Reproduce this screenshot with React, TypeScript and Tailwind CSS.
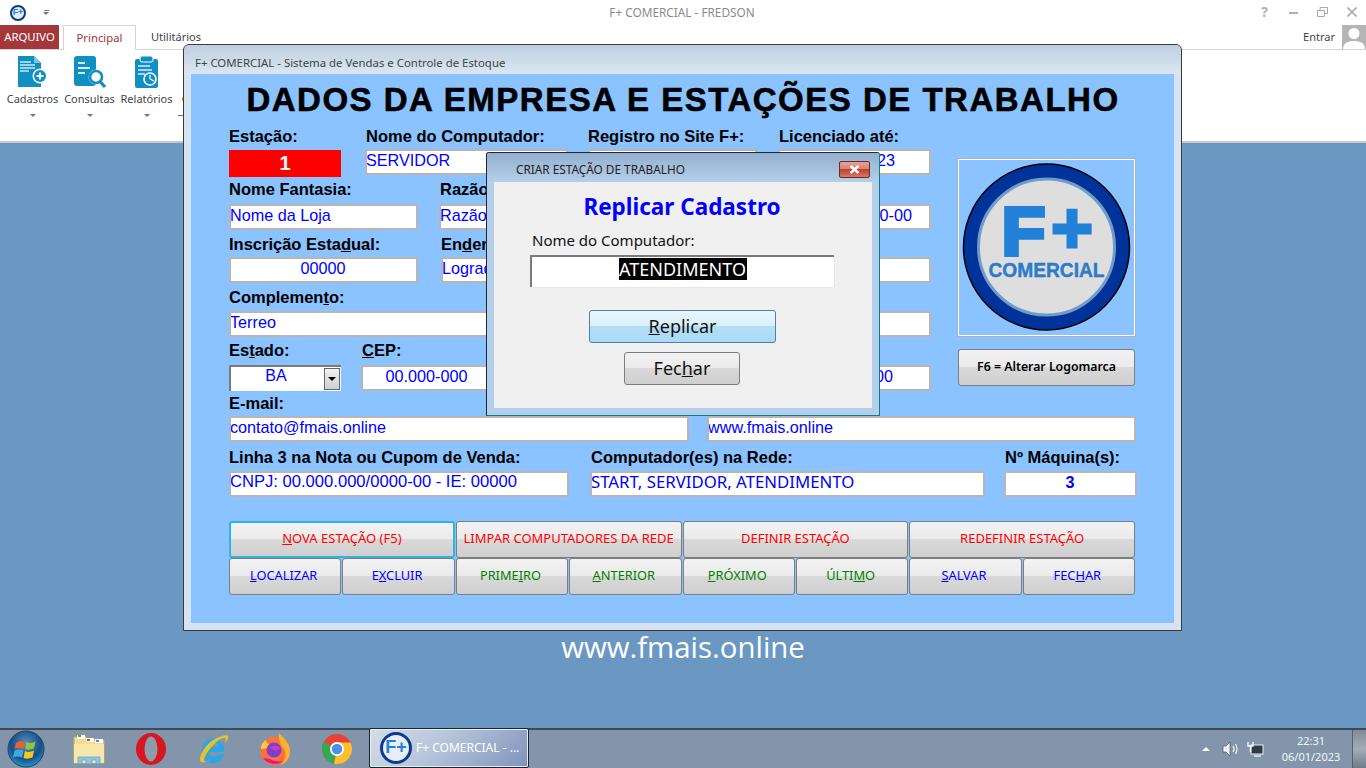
import React from "react";

const ARIAL = "font-['Liberation_Sans',Arial,sans-serif]";
const UI = "font-['Noto_Sans',Tahoma,sans-serif]";

const Field = ({
  w,
  children,
  center,
  className = "",
}: {
  w: string;
  children?: React.ReactNode;
  center?: boolean;
  className?: string;
}) => (
  <div
    className={`${w} h-[26px] shrink-0 bg-white border-2 border-[#b6b6b6] text-[16.2px] leading-[18px] text-[#0000ff] whitespace-nowrap overflow-hidden -indent-px ${
      center ? "text-center" : ""
    } ${className}`}
  >
    {children}
  </div>
);

const Label = ({ children, className = "" }: { children: React.ReactNode; className?: string }) => (
  <div className={`font-bold text-[16.5px] text-black whitespace-nowrap flex items-center ${className}`}>{children}</div>
);

const Btn = ({
  children,
  color,
  focus,
  blue,
  className = "",
}: {
  children: React.ReactNode;
  color?: string;
  focus?: boolean;
  blue?: boolean;
  className?: string;
}) => (
  <div
    className={`flex items-center justify-center rounded-[3px] border whitespace-nowrap ${UI} ${
      blue
        ? "border-[#4f81a8] bg-[linear-gradient(#e9f6fd_0%,#daf0fb_48%,#b3dff6_50%,#a9daf5_100%)]"
        : focus
        ? "border-[#2bb5e0] border-2 bg-[linear-gradient(#f2f2f2_0%,#ebebeb_48%,#d9d9d9_50%,#cfcfcf_100%)]"
        : "border-[#7d7d7d] bg-[linear-gradient(#f2f2f2_0%,#ebebeb_48%,#d9d9d9_50%,#cfcfcf_100%)]"
    } ${color || ""} ${className}`}
  >
    <span>{children}</span>
  </div>
);

const Logo = () => (
  <svg width="170" height="170" viewBox="0 0 170 170">
    <circle cx="84.500" cy="84" r="83" fill="#003399" stroke="#000" strokeWidth="1.500" />
    <circle cx="84.500" cy="84" r="68" fill="#dedede" stroke="#6f9cc8" strokeWidth="3" />
    <text x="39.500" y="91.500" textLength="44" lengthAdjust="spacingAndGlyphs" fontFamily="Liberation Sans" fontWeight="bold" fontSize="68" fill="#2380d8" stroke="#2380d8" strokeWidth="4">
      F
    </text>
    <text x="89" y="90.300" fontFamily="Liberation Sans" fontWeight="bold" fontSize="72" fill="#2380d8" stroke="#2380d8" strokeWidth="3">
      +
    </text>
    <text x="26.500" y="113.500" textLength="116" lengthAdjust="spacingAndGlyphs" fontFamily="Liberation Sans" fontWeight="bold" fontSize="20" fill="#2380d8" stroke="#3a6ea5" strokeWidth="0.4">
      COMERCIAL
    </text>
  </svg>
);

const FPlus = ({ size, ring = 4 }: { size: number; ring?: number }) => (
  <div
    className={`flex items-center justify-center rounded-full bg-[#e8eef5] border-[#0b3a8f] font-bold text-[#2380d8] ${ARIAL}`}
    style={{ width: size, height: size, borderWidth: ring, fontSize: size * 0.56, lineHeight: 1 }}
  >
    F+
  </div>
);

const CadastrosIcon = () => (
  <svg width="32" height="34" viewBox="0 0 32 34">
    <path d="M1 1h16l7 7v24H1z" fill="#0f8fc2" />
    <path d="M17 1v7h7z" fill="#7cc4e2" />
    <path d="M3 7h11M3 10h15M3 13h15M3 16h9" stroke="#cfe9f5" strokeWidth="1.400" />
    <circle cx="23" cy="21" r="7.500" fill="#fff" />
    <circle cx="23" cy="21" r="6" fill="#0f8fc2" />
    <path d="M23 17.500v7M19.500 21h7" stroke="#fff" strokeWidth="1.800" />
  </svg>
);

const ConsultasIcon = () => (
  <svg width="34" height="34" viewBox="0 0 34 34">
    <rect x="1" y="1" width="22" height="30" rx="3" fill="#0f8fc2" />
    <path d="M5 8h7M5 13h12M5 18h7" stroke="#d6edf7" strokeWidth="2" />
    <circle cx="23" cy="22" r="7.500" fill="#fff" />
    <circle cx="23" cy="22" r="6" fill="none" stroke="#0f8fc2" strokeWidth="2.600" />
    <path d="M27.500 27l4.500 5" stroke="#0f8fc2" strokeWidth="3.200" />
  </svg>
);

const RelatoriosIcon = () => (
  <svg width="26" height="34" viewBox="0 0 26 34">
    <rect x="1" y="4" width="23" height="29" rx="2" fill="#0f8fc2" />
    <rect x="6" y="1" width="13" height="6" rx="2" fill="#0f8fc2" stroke="#fff" strokeWidth="1" />
    <path d="M4 11h12M4 15h14M4 19h7" stroke="#d6edf7" strokeWidth="1.500" />
    <circle cx="16" cy="24" r="6" fill="#0f8fc2" stroke="#fff" strokeWidth="1.600" />
    <path d="M16 24v-4M16 24l4 2" stroke="#fff" strokeWidth="1.200" />
  </svg>
);

const RibbonItem = ({ icon, label, w, className = "" }: { icon: React.ReactNode; label: string; w: string; className?: string }) => (
  <div className={`${w} flex flex-col items-center shrink-0 text-[11px] text-[#444] ${UI} ${className}`}>
    <div className="h-[36px] flex items-end">{icon}</div>
    <div className="mt-[1px] leading-[17px]">{label}</div>
    <div className="mt-[7px] w-0 h-0 border-x-[3.5px] border-x-transparent border-t-[3.5px] border-t-[#777]" />
  </div>
);

const StartOrb = () => (
  <svg width="38" height="38" viewBox="0 0 38 38">
    <defs>
      <radialGradient id="orb" cx="50%" cy="35%" r="70%">
        <stop offset="0%" stopColor="#5a8fc0" />
        <stop offset="60%" stopColor="#174f86" />
        <stop offset="100%" stopColor="#2aa3d8" />
      </radialGradient>
    </defs>
    <circle cx="19" cy="19" r="18" fill="url(#orb)" stroke="#23425f" />
    <path d="M9 13q4-3 9-1l-1.500 7q-5-2-9 0z" fill="#e8622c" />
    <path d="M19.500 12q4 2 9-.5l-1.500 7q-5 2-9 .5z" fill="#8cc63f" />
    <path d="M7.500 20.500q4-2 9 0l-1.500 7q-5-2-9 0z" fill="#3fa9e0" />
    <path d="M18 21q4 2 9-.5l-1.500 7q-5 2-9 .5z" fill="#f8c81c" />
  </svg>
);

const FolderIcon = () => (
  <svg width="34" height="32" viewBox="0 0 34 32">
    <path d="M2 4h12l2 3h16v23H2z" fill="#f3dc8f" stroke="#c8ad62" />
    <rect x="5" y="2" width="8" height="4" fill="#fff" />
    <rect x="6" y="2" width="3" height="2" fill="#3bb54a" />
    <rect x="14" y="5" width="8" height="4" fill="#fff" />
    <rect x="15" y="6" width="3" height="2" fill="#d8413a" />
    <rect x="23" y="6" width="8" height="4" fill="#fff" />
    <rect x="24" y="7" width="3" height="2" fill="#2e9ad6" />
    <path d="M2 11h30v19H2z" fill="#f7e7a9" />
    <path d="M6 31V24h22v7h-4v-4h-4v4h-6v-4h-4v4z" fill="#8fc6e6" stroke="#5c9ac0" strokeWidth=".7" />
  </svg>
);

const OperaIcon = () => (
  <svg width="32" height="34" viewBox="0 0 32 34">
    <ellipse cx="16" cy="17" rx="15" ry="16" fill="#d8161f" />
    <ellipse cx="16" cy="17" rx="6.500" ry="12.500" fill="#8d9cab" />
  </svg>
);

const IeIcon = () => (
  <svg width="32" height="34" viewBox="0 0 32 34">
    <path d="M5 18a11 11 0 0 1 22-1v3H11a6 6 0 0 0 11 2h5a11 11 0 0 1-22-4zm6-3h10a5 5 0 0 0-10 0z" fill="#2ba6e6" />
    <path d="M4 30c-4-3 4-18 14-23 6-3 12-5 13-3 1 2-1 5-3 7 1-3 1-5-1-5C20 6 6 24 7 29c1 1 4 0 7-2-4 3-8 4-10 3z" fill="#e8c22c" />
  </svg>
);

const FirefoxIcon = () => (
  <svg width="32" height="34" viewBox="0 0 32 34">
    <circle cx="16" cy="19" r="14.500" fill="#ff7139" />
    <path d="M20 1c3 4 11 9 11 18 0 8-5 13-10 14 6-4 7-12 3-17-2-3-5-8-4-15z" fill="#ffb02e" />
    <path d="M2 17c0-5 3-8 5-9 0 3 2 4 4 5-2 1-2 3-2 3l-7 1z" fill="#ffcb3d" />
    <circle cx="15" cy="18" r="7.500" fill="#7b3fc9" />
    <path d="M10 16c3-3 8-3 12 0-2 1-5 3-5 3l-7-3z" fill="#c43cc0" />
    <path d="M4 26c4 6 14 8 20 3-6 1-10 0-13-2z" fill="#e31587" />
  </svg>
);

const ChromeIcon = () => (
  <svg width="32" height="32" viewBox="0 0 32 32">
    <circle cx="16" cy="16" r="15" fill="#ea4335" />
    <path d="M16 16L3 8.500A15 15 0 0 0 13 30.700z" fill="#34a853" />
    <path d="M16 16l-3 14.700A15 15 0 0 0 29.500 9.500H16z" fill="#fbc02d" />
    <circle cx="16" cy="16" r="7" fill="#fff" />
    <circle cx="16" cy="16" r="5.200" fill="#4a8fe8" />
  </svg>
);

const TaskIcon = ({ children, w, className = "" }: { children: React.ReactNode; w: string; className?: string }) => (
  <div className={`${w} shrink-0 h-full flex items-center justify-center ${className}`}>{children}</div>
);

export default function App() {
  return (
    <div className={`relative w-[1366px] h-[768px] overflow-hidden flex flex-col bg-[#6a98c3] ${UI}`}>
      {/* barra de titulo */}
      <div className="h-[25px] shrink-0 bg-white flex items-center relative">
        <div className="ml-[10px]">
          <FPlus size={16} ring={2} />
        </div>
        <div className="ml-[17px] flex flex-col items-center gap-[1px]">
          <div className="w-[5px] h-px bg-[#777]" />
          <div className="w-0 h-0 border-x-[3px] border-x-transparent border-t-[3px] border-t-[#777]" />
        </div>
        <div className="absolute left-0 right-0 text-center text-[11.800px] text-[#8a8a8a] pr-[2px]">F+ COMERCIAL - FREDSON</div>
        <div className="ml-auto flex items-center text-[#b0b0b0] -mt-[2px]">
          <span className="w-[29px] text-center font-bold text-[14px]">?</span>
          <span className="w-[29px] flex justify-center">
            <span className="w-[9px] h-[2px] bg-[#b0b0b0] mt-[3px]" />
          </span>
          <span className="w-[29px] flex justify-center">
            <svg width="11" height="10" viewBox="0 0 11 10" fill="none" stroke="#a8a8a8">
              <path d="M.5 3.500h7v6h-7zM3 3V.5h7.500v6H8" />
            </svg>
          </span>
          <span className="w-[29px] flex justify-center">
            <svg width="10" height="10" viewBox="0 0 10 10" stroke="#a8a8a8" strokeWidth="1.600">
              <path d="M.5.5l9 9M9.500.5l-9 9" />
            </svg>
          </span>
        </div>
      </div>

      {/* abas */}
      <div className="h-[25px] shrink-0 bg-white flex items-stretch border-b border-[#d4d4d4] relative text-[11.300px]">
        <div className="w-[59px] bg-[#a4373a] text-white flex items-center justify-center">ARQUIVO</div>
        <div className="ml-[4px] w-[73px] h-[25px] bg-white border border-b-0 border-[#d4d4d4] text-[#a4373a] flex items-center justify-center">
          Principal
        </div>
        <div className="ml-[15px] text-[11px] text-[#444] flex items-center">Utilitários</div>
        <div className="ml-auto flex items-center text-[#444]">
          <span className="mr-[7px] text-[11px]">Entrar</span>
          <div className="w-[24px] h-[24px] bg-[#b5b5b5] overflow-hidden flex justify-center">
            <svg width="24" height="24" viewBox="0 0 24 24" fill="#fff">
              <circle cx="12" cy="8.500" r="5.500" />
              <path d="M1 24c0-6 5-8 11-8s11 2 11 8z" />
            </svg>
          </div>
        </div>
      </div>

      {/* ribbon */}
      <div className="h-[93px] shrink-0 bg-white border-b-2 border-[#c9c9c9] flex items-start pt-[3px] pl-[4px]">
        <RibbonItem w="w-[57px]" icon={<CadastrosIcon />} label="Cadastros" />
        <RibbonItem w="w-[57px]" icon={<ConsultasIcon />} label="Consultas" />
        <RibbonItem w="w-[57px]" icon={<RelatoriosIcon />} label="Relatórios" />
        <div className="ml-[3px] mt-[62px] w-[5px] h-px shrink-0 bg-[#777]" />
        <RibbonItem w="w-[57px]" className="-ml-[5px]" icon={<span />} label="Controles" />
      </div>

      {/* area de trabalho */}
      <div className="flex-1" />

      {/* barra de tarefas */}
      <div className="h-[40px] shrink-0 bg-[#8295aa] border-t-2 border-[#3f4a55] flex items-center text-white">
        <TaskIcon w="w-[52px]">
          <StartOrb />
        </TaskIcon>
        <TaskIcon w="w-[62px]" className="ml-[6px]">
          <FolderIcon />
        </TaskIcon>
        <TaskIcon w="w-[62px]">
          <OperaIcon />
        </TaskIcon>
        <TaskIcon w="w-[62px]">
          <IeIcon />
        </TaskIcon>
        <TaskIcon w="w-[62px]">
          <FirefoxIcon />
        </TaskIcon>
        <TaskIcon w="w-[62px]">
          <ChromeIcon />
        </TaskIcon>
        <div className="ml-[1px] w-[160px] h-[40px] -mt-[2px] shrink-0 rounded-[2px] border border-[#1a2430] bg-[linear-gradient(135deg,#d5dde8_0%,#b5c3d9_45%,#7f93bb_100%)] shadow-[inset_0_0_0_1px_#e8eef5] flex items-center pl-[10px] gap-[4px] text-[12px]">
          <FPlus size={32} ring={3} />
          <span>F+ COMERCIAL - ...</span>
        </div>
        <div className="ml-auto flex items-center h-full">
          <div className="w-0 h-0 border-x-[4px] border-x-transparent border-b-[4px] border-b-white mr-[12px]" />
          <svg width="18" height="16" viewBox="0 0 18 16" className="mr-[7px]">
            <path d="M1 5h3l4-4v14l-4-4H1z" fill="#eef2f6" stroke="#39444f" strokeWidth=".6" />
            <path d="M11 5q2 3 0 6M13.500 3q3 5 0 10" fill="none" stroke="#eef2f6" strokeWidth="1.200" />
          </svg>
          <svg width="17" height="16" viewBox="0 0 17 16" className="mr-[12px]">
            <rect x="4" y="4" width="12" height="9" fill="#2f3a45" stroke="#eef2f6" />
            <path d="M7 15h7" stroke="#eef2f6" strokeWidth="1.400" />
            <path d="M1 1v4h5V1M3.500 5v6" fill="none" stroke="#fff" strokeWidth="1.300" />
          </svg>
          <div className="w-[70px] text-center text-[11px] leading-[16px] text-[#f2f5f8]">
            <div>22:31</div>
            <div>06/01/2023</div>
          </div>
          <div className="ml-[6px] w-[14px] h-full bg-[linear-gradient(#7f8c99,#a4adb6_50%,#6f7c89)] border-l border-[#50606f]" />
        </div>
      </div>

      <div className="absolute left-0 right-0 top-[628px] text-center text-[29.400px] leading-[38px] text-white font-['Open_Sans',sans-serif]">
        www.fmais.online
      </div>

      {/* janela principal */}
      <div className="absolute left-[183px] top-[44px] w-[999px] h-[587px] rounded-t-[6px] border border-[#3a3a3a] bg-[#d7e3f1] flex flex-col px-[7px] pb-[7px]">
        <div className="h-[29px] shrink-0 -mx-[7px] px-[11px] rounded-t-[6px] bg-[linear-gradient(#bfcfe0,#dbe6f2)] flex items-center text-[11.400px] text-[#444] pt-[6px]">
          F+ COMERCIAL - Sistema de Vendas e Controle de Estoque
        </div>
        <div className={`flex-1 bg-[#8ac3ff] pl-[38px] ${ARIAL}`}>
          <div className="h-[50px] text-center pr-[37px] text-[33px] leading-[52px] font-bold text-black tracking-[1.5px] whitespace-nowrap [-webkit-text-stroke:0.6px_black]">
            DADOS DA EMPRESA E ESTAÇÕES DE TRABALHO
          </div>

          <div className="flex">
            {/* coluna esquerda */}
            <div className="w-[702px] shrink-0">
              <div className="flex h-[51px]">
                <div className="w-[136px] shrink-0">
                  <Label className="h-[25px]">Estação:</Label>
                  <div className="w-[112px] h-[27px] mt-[1px] bg-[#ff0000] text-white font-bold text-[20px] text-center leading-[26px] relative">1</div>
                </div>
                <div className="w-[223px] shrink-0">
                  <Label className="h-[25px] ml-[1px]">Nome do Computador:</Label>
                  <Field w="w-[203px]">SERVIDOR</Field>
                </div>
                <div className="w-[190px] shrink-0">
                  <Label className="h-[25px]">Registro no Site F+:</Label>
                  <Field w="w-[169px]" />
                </div>
                <div>
                  <Label className="h-[25px] ml-[1px]">Licenciado até:</Label>
                  <Field w="w-[153px]" className="text-right pr-[34px]">
                    31/12/2023
                  </Field>
                </div>
              </div>

              <Label className="h-[29px]">
                <span className="w-[211px] shrink-0">Nome Fantasia:</span>
                <span>Razão Social:</span>
              </Label>
              <div className="flex">
                <Field w="w-[189px]">Nome da Loja</Field>
                <Field w="w-[270px]" className="ml-[21px]">
                  Razão Social
                </Field>
                <Field w="w-[211px]" className="ml-[11px] text-right pr-[17px]">
                  (00) 00000-00
                </Field>
              </div>

              <Label className="h-[27px] pt-[1px]">
                <span className="w-[212px] shrink-0">
                  Inscrição Esta<u>d</u>ual:
                </span>
                <span>
                  En<u>d</u>ereço:
                </span>
              </Label>
              <div className="flex">
                <Field w="w-[189px]" center>
                  00000
                </Field>
                <Field w="w-[490px]" className="ml-[23px]">
                  Logradouro
                </Field>
              </div>

              <Label className="h-[28px] pt-[1px]">
                <span>
                  Complemen<u>t</u>o:
                </span>
              </Label>
              <Field w="w-[702px]">Terreo</Field>

              <Label className="h-[28px] pb-[1px]">
                <span className="w-[133px] shrink-0">
                  Es<u>t</u>ado:
                </span>
                <span>
                  <u>C</u>EP:
                </span>
              </Label>
              <div className="flex">
                <div className="w-[112px] h-[26px] shrink-0 bg-white border-t-2 border-l-2 border-[#7a7a7a] flex items-center text-[16px] text-[#0000ff]">
                  <span className="flex-1 text-center pr-[3px] self-start leading-[18px]">BA</span>
                  <div className="w-[16px] h-[22px] mr-[1px] bg-[linear-gradient(#f2f2f2,#cfcfcf)] border border-[#666] flex items-center justify-center">
                    <span className="w-0 h-0 border-x-[4px] border-x-transparent border-t-[4px] border-t-black" />
                  </div>
                </div>
                <Field w="w-[132px]" center className="ml-[20px]">
                  00.000-000
                </Field>
                <Field w="w-[438px]" className="text-right pr-[36px]">
                  00
                </Field>
              </div>
            </div>

            {/* logomarca */}
            <div className="ml-[26px] pt-[34px] w-[179px] shrink-0">
              <div className="w-[179px] h-[179px] border border-[#b0b0b0] shadow-[inset_0_0_0_1px_#fff] flex items-center justify-center">
                <Logo />
              </div>
              <Btn className="w-[177px] h-[37px] mt-[12px] ml-[1px] text-[12.300px] font-semibold text-black">F6 = Alterar Logomarca</Btn>
            </div>
          </div>

          <Label className="h-[25px]">
            <span className="w-[479px] shrink-0">E-mail:</span>
            <span>Site:</span>
          </Label>
          <div className="flex">
            <Field w="w-[460px]">contato@fmais.online</Field>
            <Field w="w-[429px]" className="ml-[18px]">
              www.fmais.online
            </Field>
          </div>

          <Label className="h-[29px] pt-[1px]">
            <span className="w-[362px] shrink-0">Linha 3 na Nota ou Cupom de Venda:</span>
            <span className="w-[414px] shrink-0">Computador(es) na Rede:</span>
            <span>Nº Máquina(s):</span>
          </Label>
          <div className="flex">
            <Field w="w-[340px]" className="text-[16.600px]">
              CNPJ: 00.000.000/0000-00 - IE: 00000
            </Field>
            <Field w="w-[395px]" className={`ml-[21px] text-[16.800px] ${UI}`}>
              START, SERVIDOR, ATENDIMENTO
            </Field>
            <Field w="w-[133px]" center className="ml-[19px] font-bold">
              3
            </Field>
          </div>

          <div className="w-[906px] mt-[24px] grid grid-cols-4 gap-px h-[37px] text-[13px]">
            <Btn focus color="text-[#ff0000]" className="pb-[2px]">
              <u>N</u>OVA ESTAÇÃO (F5)
            </Btn>
            <Btn color="text-[#ff0000]" className="pb-[2px]">LIMPAR COMPUTADORES DA REDE</Btn>
            <Btn color="text-[#ff0000]" className="pb-[2px]">DEFINIR ESTAÇÃO</Btn>
            <Btn color="text-[#ff0000]" className="pb-[2px]">REDEFINIR ESTAÇÃO</Btn>
          </div>
          <div className="w-[906px] grid grid-cols-8 gap-px h-[37px] text-[12.800px]">
            <Btn color="text-[#0000ff]" className="pr-[3px] pb-[2px]">
              <u>L</u>OCALIZAR
            </Btn>
            <Btn color="text-[#0000ff]" className="pr-[3px] pb-[2px]">
              E<u>X</u>CLUIR
            </Btn>
            <Btn color="text-[#008000]" className="pr-[3px] pb-[2px]">
              PRIME<u>I</u>RO
            </Btn>
            <Btn color="text-[#008000]" className="pr-[3px] pb-[2px]">
              <u>A</u>NTERIOR
            </Btn>
            <Btn color="text-[#008000]" className="pr-[3px] pb-[2px]">
              <u>P</u>RÓXIMO
            </Btn>
            <Btn color="text-[#008000]" className="pr-[3px] pb-[2px]">
              ÚLTI<u>M</u>O
            </Btn>
            <Btn color="text-[#0000ff]" className="pr-[3px] pb-[2px]">
              <u>S</u>ALVAR
            </Btn>
            <Btn color="text-[#0000ff]" className="pr-[3px] pb-[2px]">
              FEC<u>H</u>AR
            </Btn>
          </div>
        </div>
      </div>

      {/* dialogo */}
      <div className="absolute left-[486px] top-[152px] w-[394px] h-[264px] rounded-t-[3px] border border-[#1c2a35] border-r-[#08808c] border-b-[#08808c] bg-[#b4cfe9] flex flex-col px-[7px] pb-[7px]">
        <div className="h-[29px] shrink-0 -mx-[7px] rounded-t-[3px] bg-[linear-gradient(#93b0cf,#b4cfe9)] flex items-center pl-[29px] pr-[9px] pt-[5px] text-[11.800px] text-[#222]">
          <span>CRIAR ESTAÇÃO DE TRABALHO</span>
          <div className="ml-auto w-[31px] h-[17px] -mt-[1px] rounded-[2px] border border-[#6b2a2a] bg-[linear-gradient(#e6a195_0%,#d98476_45%,#c0412d_50%,#d67a66_100%)] flex items-center justify-center">
            <svg width="11" height="9" viewBox="0 0 11 9" stroke="#fff" strokeWidth="2.400">
              <path d="M1.500 1l8 7M9.500 1l-8 7" />
            </svg>
          </div>
        </div>
        <div className="flex-1 bg-[#f0f0f0] flex flex-col">
          <div className="h-[50px] text-center font-bold text-[22.500px] leading-[50px] text-[#0000ff] pr-[2px]">Replicar Cadastro</div>
          <div className="pl-[38px] text-[15px] leading-[18px] -mt-[1px] text-[#111]">Nome do Computador:</div>
          <div className="ml-[36px] mt-[6px] w-[304px] h-[32px] bg-white border-t-2 border-l-2 border-[#7a7a7a] shadow-[1px_1px_0_#e8e8e8] flex items-start justify-center pt-px">
            <span className="bg-black text-white text-[18px] leading-[22px] pr-[1px]">ATENDIMENTO</span>
          </div>
          <Btn blue className="self-center w-[187px] h-[33px] mt-[23px] text-[18px] text-[#111] ml-[-1px]">
            <u>R</u>eplicar
          </Btn>
          <Btn className="self-center w-[116px] h-[33px] mt-[9px] text-[18px] text-[#111] ml-[-2px]">
            Fec<u>h</u>ar
          </Btn>
        </div>
      </div>
    </div>
  );
}
